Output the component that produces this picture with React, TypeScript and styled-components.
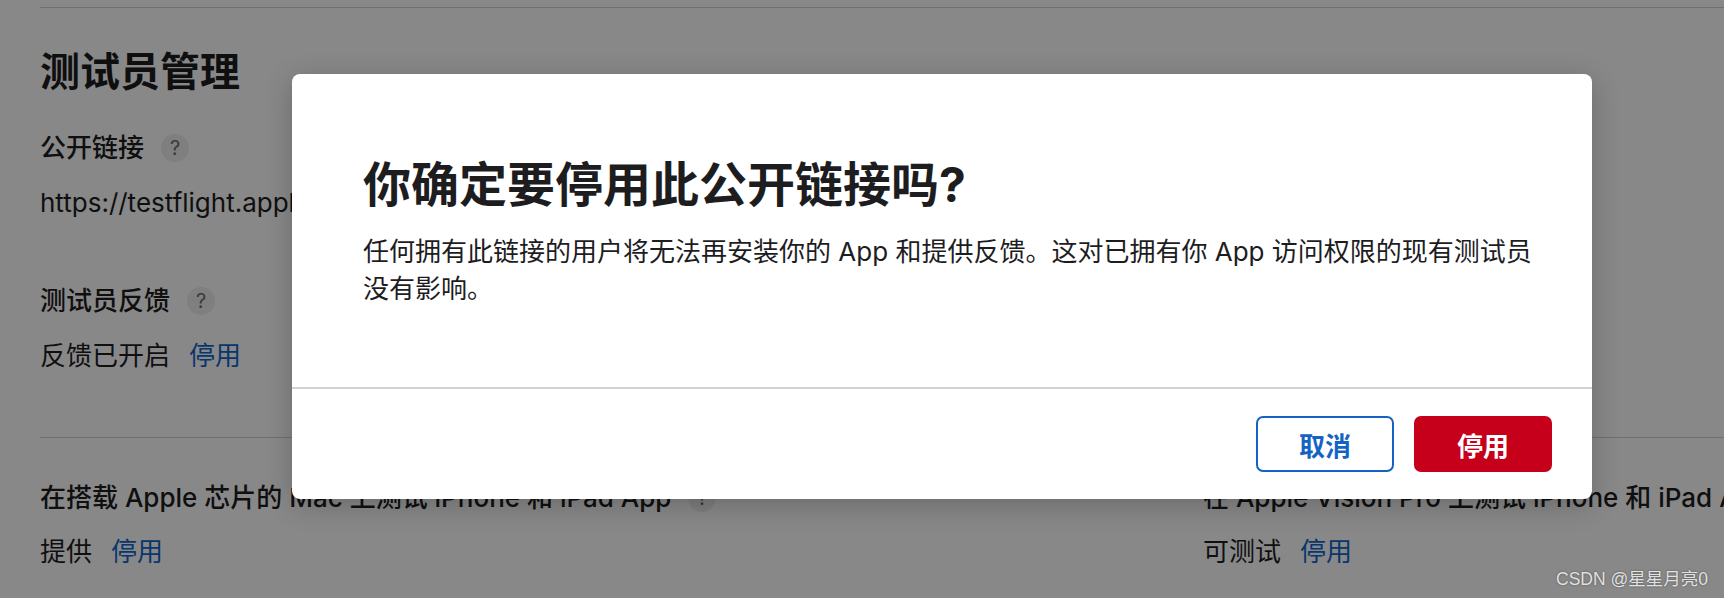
import React from "react";
import styled, { createGlobalStyle } from "styled-components";

const GlobalStyle = createGlobalStyle`
  html, body {
    margin: 0;
    padding: 0;
  }
  body {
    background: #fff;
    color: #1d1d1f;
    font-family: Inter, "Noto Sans CJK SC", sans-serif;
    overflow: hidden;
  }
`;

const Screen = styled.div`
  position: relative;
  width: 1724px;
  height: 598px;
  overflow: hidden;
`;

const Page = styled.main`
  padding: 7px 0 0 40px;
`;

const Section = styled.section<{ $padTop: number; $padBottom?: number }>`
  border-top: 1px solid #d2d2d7;
  padding-top: ${(p) => p.$padTop}px;
  padding-bottom: ${(p) => p.$padBottom ?? 0}px;
`;

const Heading = styled.h2`
  margin: 0;
  font-size: 40px;
  line-height: 48px;
  font-weight: 700;
`;

const Field = styled.div<{ $gap: number }>`
  margin-top: ${(p) => p.$gap}px;
`;

const Label = styled.div`
  display: flex;
  align-items: center;
  gap: 17px;
  height: 36px;
  font-size: 26px;
  line-height: 36px;
  font-weight: 500;
  white-space: nowrap;
`;

const Help = styled.span`
  display: inline-flex;
  align-items: center;
  justify-content: center;
  width: 28px;
  height: 28px;
  border-radius: 50%;
  background: #efeff1;
  color: #6e6e73;
  font-size: 20px;
  font-weight: 400;
`;

const Value = styled.div<{ $gap?: number }>`
  display: flex;
  align-items: center;
  gap: 19px;
  margin-top: ${(p) => p.$gap ?? 19}px;
  height: 36px;
  font-size: 26px;
  line-height: 36px;
  white-space: nowrap;
`;

const Link = styled.a`
  color: #0f66cc;
  text-decoration: none;
`;

const Columns = styled.div`
  display: grid;
  grid-template-columns: 1163px 1fr;
`;

const Overlay = styled.div`
  position: absolute;
  inset: 0;
  background: rgba(0, 0, 0, 0.467);
`;

const Modal = styled.div`
  position: absolute;
  left: 292px;
  top: 74px;
  width: 1300px;
  background: #fff;
  border-radius: 8px;
  box-shadow: 0 6px 28px rgba(0, 0, 0, 0.22);
  overflow: hidden;
`;

const ModalBody = styled.div`
  padding: 82px 48px 80px 71px;
`;

const Title = styled.h1`
  margin: 0;
  font-size: 48px;
  line-height: 58px;
  font-weight: 700;
  color: #1d1d1f;
`;

const Message = styled.p`
  margin: 19px 0 0;
  font-size: 26px;
  line-height: 37px;
  color: #1d1d1f;
`;

const Footer = styled.div`
  display: flex;
  justify-content: flex-end;
  gap: 20px;
  padding: 27px 40px;
  border-top: 2px solid #d2d2d2;
`;

const Button = styled.button<{ $primary?: boolean }>`
  width: 138px;
  height: 56px;
  border-radius: 7px;
  font-family: inherit;
  font-size: 26px;
  font-weight: 600;
  cursor: pointer;
  border: 2px solid ${(p) => (p.$primary ? "#c6001b" : "#1463c4")};
  background: ${(p) => (p.$primary ? "#c6001b" : "#fff")};
  color: ${(p) => (p.$primary ? "#fff" : "#1463c4")};
`;

const Watermark = styled.div`
  position: absolute;
  right: 16px;
  bottom: 8px;
  font-family: "Liberation Sans", "Noto Sans CJK SC", sans-serif;
  font-size: 17.5px;
  color: rgba(255, 255, 255, 0.82);
  text-shadow: 0 0 2px rgba(0, 0, 0, 0.45);
`;

export default function App() {
  return (
    <Screen>
      <GlobalStyle />
      <Page>
        <Section $padTop={40} $padBottom={63}>
          <Heading>测试员管理</Heading>
          <Field $gap={34}>
            <Label>
              公开链接 <Help>?</Help>
            </Label>
            <Value>https://testflight.apple.com/join/a8Xk2LpQ</Value>
          </Field>
          <Field $gap={62}>
            <Label>
              测试员反馈 <Help>?</Help>
            </Label>
            <Value>
              反馈已开启 <Link href="#">停用</Link>
            </Value>
          </Field>
        </Section>
        <Section $padTop={42}>
          <Columns>
            <Field $gap={0}>
              <Label>
                在搭载 Apple 芯片的 Mac 上测试 iPhone 和 iPad App <Help>?</Help>
              </Label>
              <Value $gap={18}>
                提供 <Link href="#">停用</Link>
              </Value>
            </Field>
            <Field $gap={0}>
              <Label>
                在 Apple Vision Pro 上测试 iPhone 和 iPad App <Help>?</Help>
              </Label>
              <Value $gap={18}>
                可测试 <Link href="#">停用</Link>
              </Value>
            </Field>
          </Columns>
        </Section>
      </Page>
      <Overlay />
      <Modal role="dialog">
        <ModalBody>
          <Title>你确定要停用此公开链接吗?</Title>
          <Message>
            任何拥有此链接的用户将无法再安装你的 App 和提供反馈。这对已拥有你 App 访问权限的现有测试员没有影响。
          </Message>
        </ModalBody>
        <Footer>
          <Button>取消</Button>
          <Button $primary>停用</Button>
        </Footer>
      </Modal>
      <Watermark>CSDN @星星月亮0</Watermark>
    </Screen>
  );
}
